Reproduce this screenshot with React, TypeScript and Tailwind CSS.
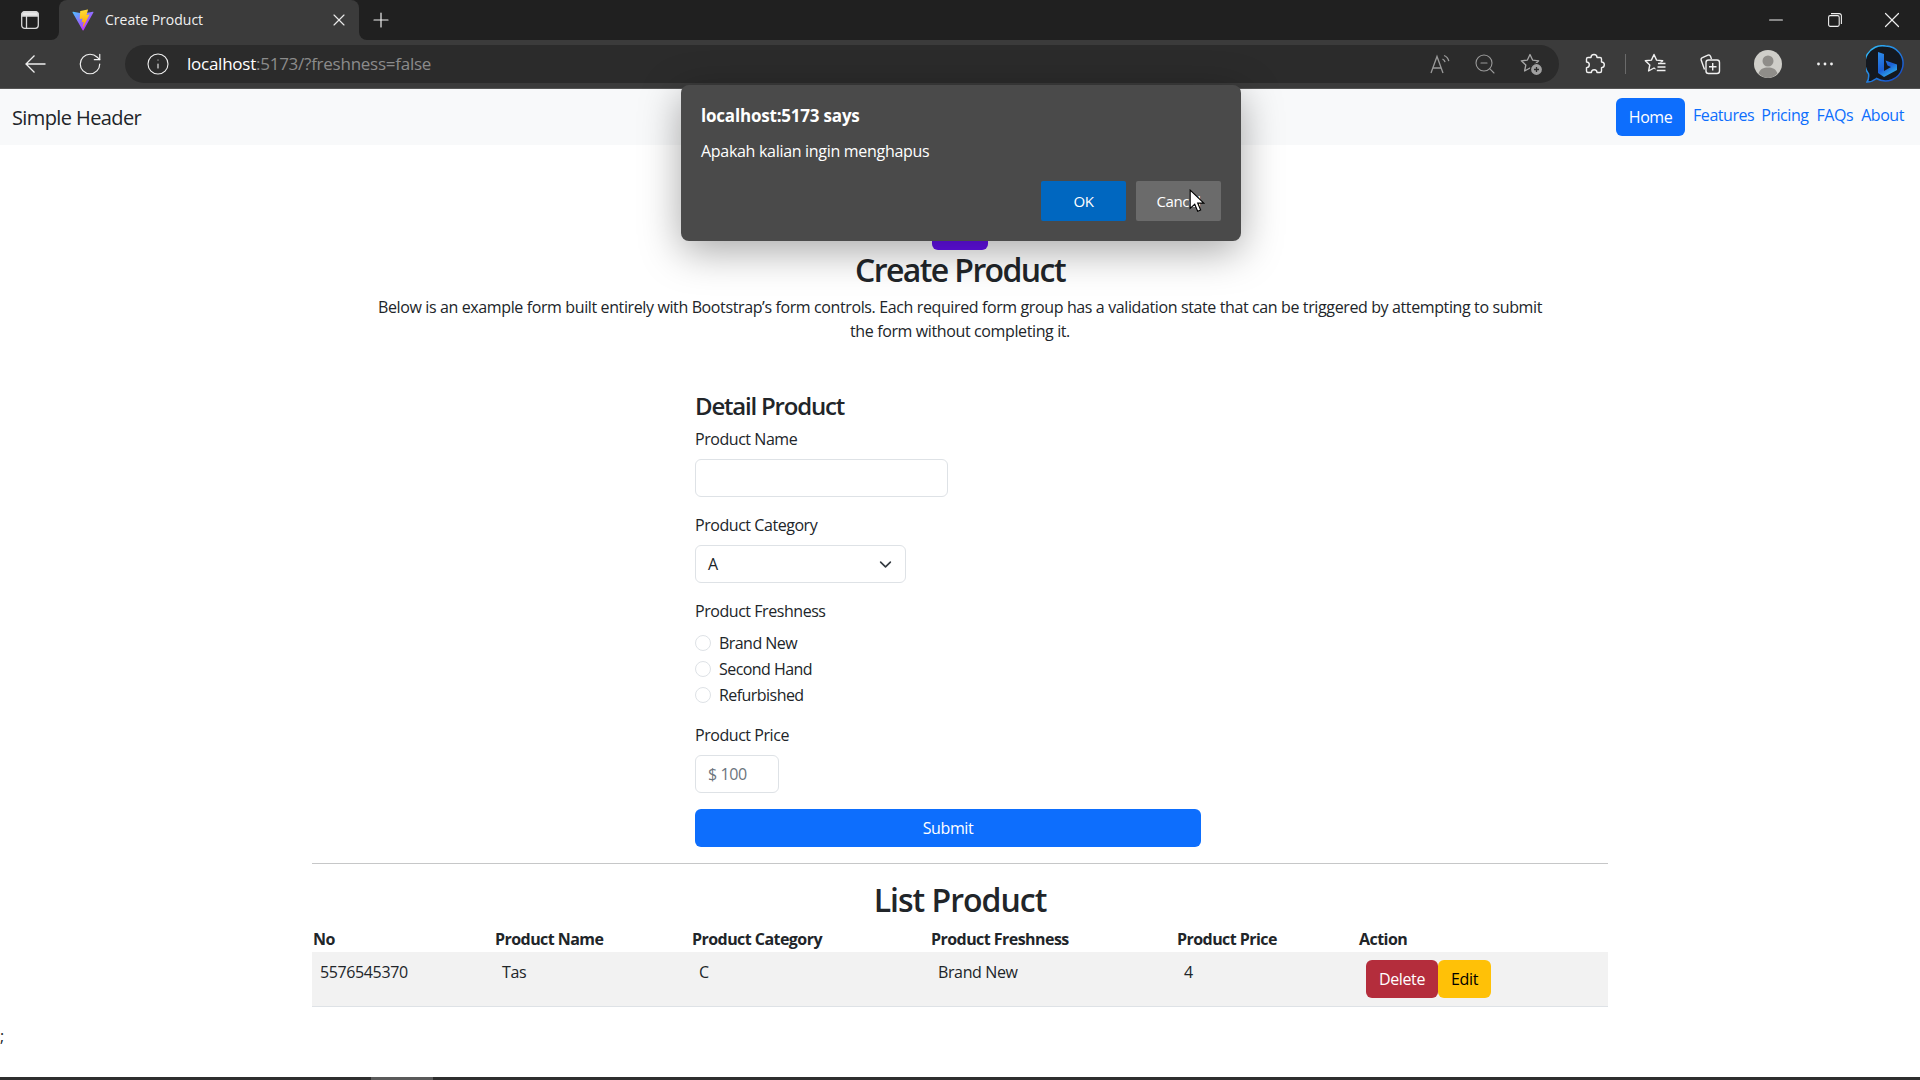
import { Info, Minus, Plus, RotateCw, X, ZoomOut } from "lucide-react";

const columns = [
  { title: "No", width: "w-[182px]", value: "5576545370" },
  { title: "Product Name", width: "w-[197px]", value: "Tas" },
  { title: "Product Category", width: "w-[239px]", value: "C" },
  { title: "Product Freshness", width: "w-[246px]", value: "Brand New" },
  { title: "Product Price", width: "w-[182px]", value: "4" },
];

const STAR = "M11 2.5l2.6 5.6 6.1.7-4.5 4.2 1.2 6-5.4-3-5.4 3 1.2-6L2.3 8.8l6.1-.7z";

function ViteLogo() {
  return (
    <svg viewBox="0 0 32 32" className="h-6 w-6">
      <defs>
        <linearGradient id="viteA" x1="6" y1="33" x2="235" y2="344" gradientUnits="userSpaceOnUse" gradientTransform="scale(0.08)">
          <stop stopColor="#41d1ff" />
          <stop offset="1" stopColor="#bd34fe" />
        </linearGradient>
        <linearGradient id="viteB" x1="194" y1="8" x2="236" y2="292" gradientUnits="userSpaceOnUse" gradientTransform="scale(0.08)">
          <stop stopColor="#ffea83" />
          <stop offset="0.08" stopColor="#ffdd35" />
          <stop offset="1" stopColor="#ffa800" />
        </linearGradient>
      </defs>
      <path fill="url(#viteA)" d="M29.884 6.146 16.742 29.646c-.271.485-.968.488-1.243.005L2.096 6.148c-.3-.526.15-1.163.746-1.057l13.156 2.352a.714.714 0 0 0 .253 0l12.881-2.348c.594-.108 1.046.524.752 1.051z" />
      <path fill="url(#viteB)" d="M22.264 2.007 12.54 3.912a.357.357 0 0 0-.288.33l-.598 10.104a.357.357 0 0 0 .437.369l2.707-.625a.357.357 0 0 1 .43.42l-.804 3.939a.357.357 0 0 0 .453.413l1.672-.508a.357.357 0 0 1 .453.414l-1.278 6.185c-.08.387.435.598.65.267l.143-.222 7.925-15.815a.357.357 0 0 0-.387-.51l-2.787.538a.357.357 0 0 1-.41-.45l1.818-6.306a.357.357 0 0 0-.412-.45z" />
    </svg>
  );
}

function TabActionsIcon() {
  return (
    <svg viewBox="0 0 18 18" className="h-[18px] w-[18px]" fill="none" stroke="#d8d8d8" strokeWidth="1.3">
      <path d="M1 5V3.5A2.5 2.5 0 0 1 3.5 1h11A2.5 2.5 0 0 1 17 3.5V5z" fill="#e8e8e8" />
      <rect x="0.7" y="0.7" width="16.6" height="16.6" rx="3" />
      <path d="M5.5 5v12" />
    </svg>
  );
}

function BackIcon() {
  return (
    <svg viewBox="0 0 22 22" className="h-[22px] w-[22px]" fill="none" stroke="#eeeeee" strokeWidth="1.3">
      <path d="M2 11h19.5M10.5 2.5 2 11l8.5 8.5" />
    </svg>
  );
}

function ReadAloudIcon() {
  return (
    <svg viewBox="0 0 24 24" className="h-6 w-6" fill="none" stroke="#9a9a9a" strokeWidth="1.3">
      <path d="M3 21 9 4.5 15 21M5 16h8" />
      <path d="M14.5 7c1.4.7 2.3 1.8 2.6 3.2M16 3.5c2.5 1 4.2 3 4.8 5.6" />
    </svg>
  );
}

function FavAddIcon() {
  return (
    <svg viewBox="0 0 24 24" className="h-6 w-6" fill="none" stroke="#a8a8a8" strokeWidth="1.3" strokeLinejoin="round">
      <path d={STAR} />
      <circle cx="17.5" cy="17.5" r="6" fill="#a0a0a0" stroke="#2b2b2b" strokeWidth="1.2" />
      <path d="M17.5 15v5M15 17.5h5" stroke="#2b2b2b" strokeWidth="1.3" />
    </svg>
  );
}

function ExtensionsIcon() {
  return (
    <svg viewBox="0 0 24 24" className="h-6 w-6" fill="none" stroke="#f0f0f0" strokeWidth="1.4" strokeLinejoin="round">
      <path d="M9 5.5a3 3 0 0 1 6 0h3a1.5 1.5 0 0 1 1.5 1.5v3a2.8 2.8 0 0 1 0 5.6V19a1.5 1.5 0 0 1-1.5 1.5h-3a2.8 2.8 0 0 0-5.6 0H6A1.5 1.5 0 0 1 4.5 19v-3.4a2.8 2.8 0 0 0 0-5.6V7A1.5 1.5 0 0 1 6 5.5z" />
    </svg>
  );
}

function FavoritesIcon() {
  return (
    <svg viewBox="0 0 24 24" className="h-6 w-6" fill="none" stroke="#f0f0f0" strokeWidth="1.4" strokeLinejoin="round">
      <path d={STAR} />
      <rect x="12.5" y="10.5" width="11" height="11" fill="#3b3b3b" stroke="none" />
      <path d="M15 11.5h7.5M14.5 15h8M13.8 18.5h8.7" />
    </svg>
  );
}

function CollectionsIcon() {
  return (
    <svg viewBox="0 0 24 24" className="h-6 w-6" fill="none" stroke="#f0f0f0" strokeWidth="1.4" strokeLinejoin="round">
      <path d="M6.5 17.5 3.2 8.2a2 2 0 0 1 1.2-2.6L10 3.2a2 2 0 0 1 2.5 1.1L13.5 7" />
      <rect x="8" y="8" width="13.5" height="13.5" rx="2.5" />
      <path d="M14.7 11v7.5M11 14.7h7.5" />
    </svg>
  );
}

function RestoreIcon() {
  return (
    <svg viewBox="0 0 14 14" className="h-[14px] w-[14px]" fill="none" stroke="#eeeeee" strokeWidth="1.1">
      <rect x="0.6" y="2.6" width="10.6" height="10.8" rx="1.6" />
      <path d="M3 .6h8.2A2.2 2.2 0 0 1 13.4 2.8V11" />
    </svg>
  );
}

function AvatarIcon() {
  return (
    <svg viewBox="0 0 28 28" className="h-7 w-7">
      <circle cx="14" cy="14" r="14" fill="#cfcec9" />
      <circle cx="14" cy="11" r="5.5" fill="#8f8d89" />
      <path d="M4.5 23.5C6 19 9.5 17.5 14 17.5s8 1.5 9.5 6A14 14 0 0 1 14 28a14 14 0 0 1-9.5-4.5z" fill="#8f8d89" />
    </svg>
  );
}

function MoreIcon() {
  return (
    <svg viewBox="0 0 16 4" className="h-1 w-4" fill="#f0f0f0">
      <circle cx="1.5" cy="2" r="1.4" />
      <circle cx="8" cy="2" r="1.4" />
      <circle cx="14.5" cy="2" r="1.4" />
    </svg>
  );
}

function BingIcon() {
  return (
    <svg viewBox="0 0 38 38" className="h-[38px] w-[38px]">
      <defs>
        <linearGradient id="bingA" x1="12" y1="6" x2="28" y2="32" gradientUnits="userSpaceOnUse">
          <stop stopColor="#2f8fe8" />
          <stop offset="0.6" stopColor="#1b5fd6" />
          <stop offset="1" stopColor="#37c5f0" />
        </linearGradient>
        <linearGradient id="bingR" x1="4" y1="4" x2="34" y2="36" gradientUnits="userSpaceOnUse">
          <stop stopColor="#2fb4f5" />
          <stop offset="1" stopColor="#1446c8" />
        </linearGradient>
      </defs>
      <path d="M19.5 1a17.5 17.5 0 1 1-9 32.5C8 35.5 4.5 37 1 37c1.4-2 2-4.5 1.6-8A17.5 17.5 0 0 1 19.5 1z" fill="#14181f" stroke="url(#bingR)" strokeWidth="1.5" />
      <path d="M12 7l6 2v17l7-4-3.4-1.6-2.1-5 11.5 4v5.6L18 32l-6-4z" fill="url(#bingA)" />
    </svg>
  );
}

function Cursor() {
  return (
    <svg viewBox="0 0 14 22" className="absolute left-[508px] top-[104px] h-[25px] w-4">
      <path d="M1 1v16l4-3.6 2.6 6.2 2.6-1.1-2.6-6.1H13z" fill="#fff" stroke="#000" strokeWidth="1" />
    </svg>
  );
}

function Field({ label, children }: { label: string; children: React.ReactNode }) {
  return (
    <div className="mb-4">
      <label className="mb-2 block leading-6 tracking-[-0.45px]">{label}</label>
      {children}
    </div>
  );
}

function Radio({ label }: { label: string }) {
  return (
    <label className="flex h-[26px] items-center gap-2 tracking-[-0.55px]">
      <span className="h-4 w-4 rounded-full border border-[#dee2e6] bg-white" />
      {label}
    </label>
  );
}

export default function App() {
  return (
    <div className="relative flex h-screen flex-col overflow-hidden bg-white font-['Open_Sans',sans-serif] text-[16px] tracking-[-0.38px] text-[#212529]">
      {/* Tab strip */}
      <div className="flex h-10 shrink-0 bg-[linear-gradient(#202020_50%,#3b3b3b_50%)] text-white">
        <div className="flex w-[59px] items-center justify-center rounded-br-lg bg-[#202020] pl-[1px]">
          <TabActionsIcon />
        </div>
        <div className="flex h-full w-[300px] items-center rounded-t-lg bg-[#3b3b3b] pl-[12px] pr-[10px]">
          <ViteLogo />
          <span className="ml-[10px] flex-1 text-[14px] leading-none tracking-normal text-[#f0f0f0]">Create Product</span>
          <X className="h-5 w-5 text-[#e8e8e8]" strokeWidth={1.4} />
        </div>
        <div className="flex flex-1 items-center rounded-bl-lg bg-[#202020]">
          <Plus className="ml-[10px] h-[24px] w-[24px] text-[#f0f0f0]" strokeWidth={1.2} />
          <div className="flex-1" />
          <div className="flex items-center text-[#eeeeee]">
            <Minus className="mr-[41px] h-[22px] w-[22px]" strokeWidth={1.1} />
            <RestoreIcon />
            <X className="ml-[37px] mr-[15px] h-[26px] w-[26px]" strokeWidth={1.1} />
          </div>
        </div>
      </div>

      {/* Toolbar */}
      <div className="flex h-[49px] shrink-0 items-center border-b border-[#555] bg-[#3b3b3b] pl-[24px]">
        <BackIcon />
        <RotateCw className="ml-[31px] h-[26px] w-[26px] text-[#f0f0f0]" strokeWidth={1.1} />
        <div className="ml-[22px] flex h-[38px] w-[1434px] items-center rounded-full bg-[#2b2b2b] pl-[21px]">
          <Info className="h-6 w-6 text-[#f0f0f0]" strokeWidth={1.1} />
          <span className="ml-[17px] flex-1 text-[17px] tracking-[-0.25px] text-[#8b8b8b]">
            <span className="text-white">localhost</span>:5173/?freshness=false
          </span>
          <ReadAloudIcon />
          <ZoomOut className="ml-[21px] h-6 w-6 text-[#9a9a9a]" strokeWidth={1.1} />
          <div className="ml-[22px] mr-[16px]">
            <FavAddIcon />
          </div>
        </div>
        <div className="ml-[23px]">
          <ExtensionsIcon />
        </div>
        <div className="ml-[19px] h-5 w-px bg-[#6a6a6a]" />
        <div className="ml-[17px]">
          <FavoritesIcon />
        </div>
        <div className="ml-[31px]">
          <CollectionsIcon />
        </div>
        <div className="ml-[32px]">
          <AvatarIcon />
        </div>
        <div className="ml-[35px]">
          <MoreIcon />
        </div>
        <div className="ml-[33px]">
          <BingIcon />
        </div>
      </div>

      {/* Page header */}
      <header className="flex h-14 shrink-0 items-center justify-between bg-[#f8f9fa] pl-3 pr-4">
        <span className="mt-[2px] text-[20px] tracking-[-0.6px]">Simple Header</span>
        <nav className="flex items-center tracking-[-0.45px] text-[#0d6efd]">
          <a className="flex h-[38px] w-[69px] items-center justify-center rounded-md bg-[#0d6efd] text-white">Home</a>
          <a className="mb-[5px] ml-2">Features</a>
          <a className="mb-[5px] ml-[7px]">Pricing</a>
          <a className="mb-[5px] ml-2">FAQs</a>
          <a className="mb-[5px] ml-2">About</a>
        </nav>
      </header>

      {/* Main content */}
      <main className="mx-auto w-[1296px] flex-1">
        <div className="mx-auto mb-px mt-[33px] h-[72px] w-[56px] rounded-md bg-[#6610f2]" />
        <h2 className="text-center text-[32px] font-semibold leading-[38px] tracking-[-1.6px]">Create Product</h2>
        <p className="mx-auto mt-[6px] w-[1180px] text-center leading-6">
          Below is an example form built entirely with Bootstrap’s form controls. Each required form group has a validation state that can be triggered by attempting to submit the form without completing it.
        </p>

        <form className="mx-auto mt-[48px] w-[530px] pr-6">
          <h4 className="mb-[7px] text-[24px] font-semibold leading-[29px] tracking-[-1.2px]">Detail Product</h4>
          <Field label="Product Name">
            <div className="h-[38px] w-[253px] rounded-md border border-[#dee2e6] bg-white" />
          </Field>
          <Field label="Product Category">
            <div className="flex h-[38px] w-[211px] items-center justify-between rounded-md border border-[#dee2e6] bg-white pl-3 pr-[13px]">
              A
              <svg viewBox="0 0 16 16" className="h-[13px] w-[13px]" fill="none" stroke="#343a40" strokeWidth="2" strokeLinecap="round" strokeLinejoin="round">
                <path d="m2 5 6 6 6-6" />
              </svg>
            </div>
          </Field>
          <Field label="Product Freshness">
            <div className="-mb-px -mt-px">
              <Radio label="Brand New" />
              <Radio label="Second Hand" />
              <Radio label="Refurbished" />
            </div>
          </Field>
          <Field label="Product Price">
            <div className="flex h-[38px] w-[84px] items-center rounded-md border border-[#dee2e6] bg-white pl-3 text-[#6c757d]">$ 100</div>
          </Field>
          <button type="button" className="h-[38px] w-full rounded-md bg-[#0d6efd] text-white">
            Submit
          </button>
        </form>

        <hr className="mt-4 border-[#c6c7c8]" />
        <h2 className="mt-[17px] text-center text-[32px] font-semibold leading-[38px] tracking-[-1px]">List Product</h2>

        <table className="mt-[8px] w-full table-fixed border-collapse text-left">
          <thead>
            <tr>
              {columns.map((col) => (
                <th key={col.title} className={`${col.width} px-px pb-px font-bold leading-6 tracking-[-0.55px]`}>
                  {col.title}
                </th>
              ))}
              <th className="px-px pb-px font-bold leading-6 tracking-[-0.55px]">Action</th>
            </tr>
          </thead>
          <tbody>
            <tr className="border-b border-[#dee2e6] bg-[#f2f2f2]">
              {columns.map((col) => (
                <td key={col.title} className="p-2 align-top leading-6">
                  {col.value}
                </td>
              ))}
              <td className="p-2 align-top leading-6">
                <div className="flex">
                  <button type="button" className="h-[38px] w-[72px] rounded-md bg-[#b42d3c] text-white">
                    Delete
                  </button>
                  <button type="button" className="h-[38px] w-[53px] rounded-md bg-[#ffc107] text-black">
                    Edit
                  </button>
                </div>
              </td>
            </tr>
          </tbody>
        </table>
      </main>

      <div className="absolute bottom-[36px] left-0 leading-none">;</div>

      {/* Window bottom edge */}
      <div className="flex h-[3px] shrink-0 bg-[#2e2e2e]">
        <div className="ml-[371px] h-full w-[62px] bg-[#5a5a5a]" />
      </div>

      {/* Native confirm dialog */}
      <div className="absolute left-[681px] top-[85px] h-[156px] w-[560px] rounded-lg bg-[#4a4a4a] px-[20px] pt-[21px] text-white shadow-[0_10px_40px_rgba(0,0,0,0.35)]">
        <div className="text-[17px] font-bold leading-5 tracking-[-0.2px]">localhost:5173 says</div>
        <div className="mt-[15px] leading-5 tracking-[-0.3px]">Apakah kalian ingin menghapus</div>
        <div className="absolute bottom-[20px] right-5 flex gap-[10px] text-[15px] font-medium">
          <button type="button" className="h-10 w-[85px] rounded-[2px] bg-[#0067c0] text-white">
            OK
          </button>
          <button type="button" className="h-10 w-[85px] rounded-[2px] bg-[#6b6b6b] text-white">
            Cancel
          </button>
        </div>
        <Cursor />
      </div>
    </div>
  );
}
